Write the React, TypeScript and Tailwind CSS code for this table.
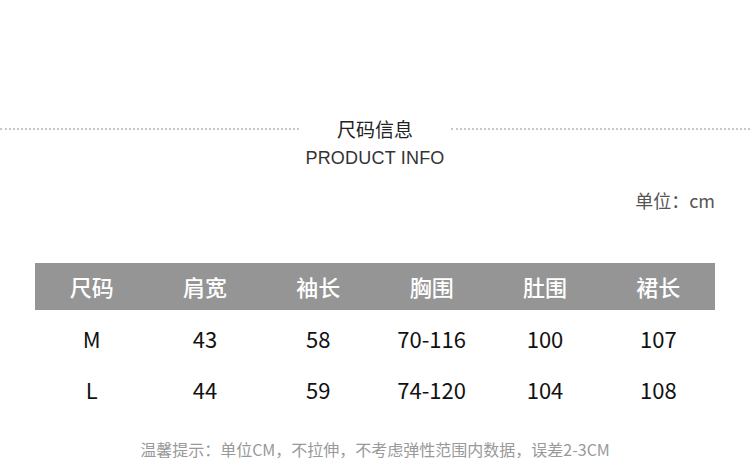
const headers = ["尺码", "肩宽", "袖长", "胸围", "肚围", "裙长"];
const rows = [
  ["M", "43", "58", "70-116", "100", "107"],
  ["L", "44", "59", "74-120", "104", "108"],
];

function Dots() {
  return <div className="h-0 flex-1 border-t-2 border-dotted border-[#c8c8c8]" />;
}

export default function App() {
  return (
    <div
      className="flex h-[463px] w-[750px] flex-col bg-white"
      style={{ fontFamily: '"Noto Sans CJK SC", "Noto Sans", sans-serif' }}
    >
      {/* title */}
      <div className="mt-[116px] flex items-center">
        <Dots />
        <div className="w-[152px] text-center text-[19px] leading-[26px] text-[#222]">尺码信息</div>
        <Dots />
      </div>
      <div
        className="mt-[5px] text-center text-[18px] leading-[22px] tracking-[0.2px] text-[#333]"
        style={{ fontFamily: '"Liberation Sans", sans-serif', fontWeight: 300 }}
      >
        PRODUCT INFO
      </div>

      <div className="mt-[19px] pr-[35px] text-right text-[18px] leading-[24px] text-[#555]">单位：cm</div>

      {/* table */}
      <div className="mx-[35px] mt-[51px]">
        <div className="grid h-[47px] grid-cols-6 items-center bg-[#959595] text-[22px] font-medium text-white">
          {headers.map((h) => (
            <div key={h} className="text-center">
              {h}
            </div>
          ))}
        </div>
        {rows.map((r) => (
          <div key={r[0]} className="grid h-[51px] grid-cols-6 items-center pt-[6px] text-[22px] text-[#111]">
            {r.map((c, i) => (
              <div key={i} className="text-center">
                {c}
              </div>
            ))}
          </div>
        ))}
      </div>

      <div className="mt-[27px] text-center text-[16px] leading-[20px] text-[#999]">
        温馨提示：单位CM，不拉伸，不考虑弹性范围内数据，误差2-3CM
      </div>
    </div>
  );
}
